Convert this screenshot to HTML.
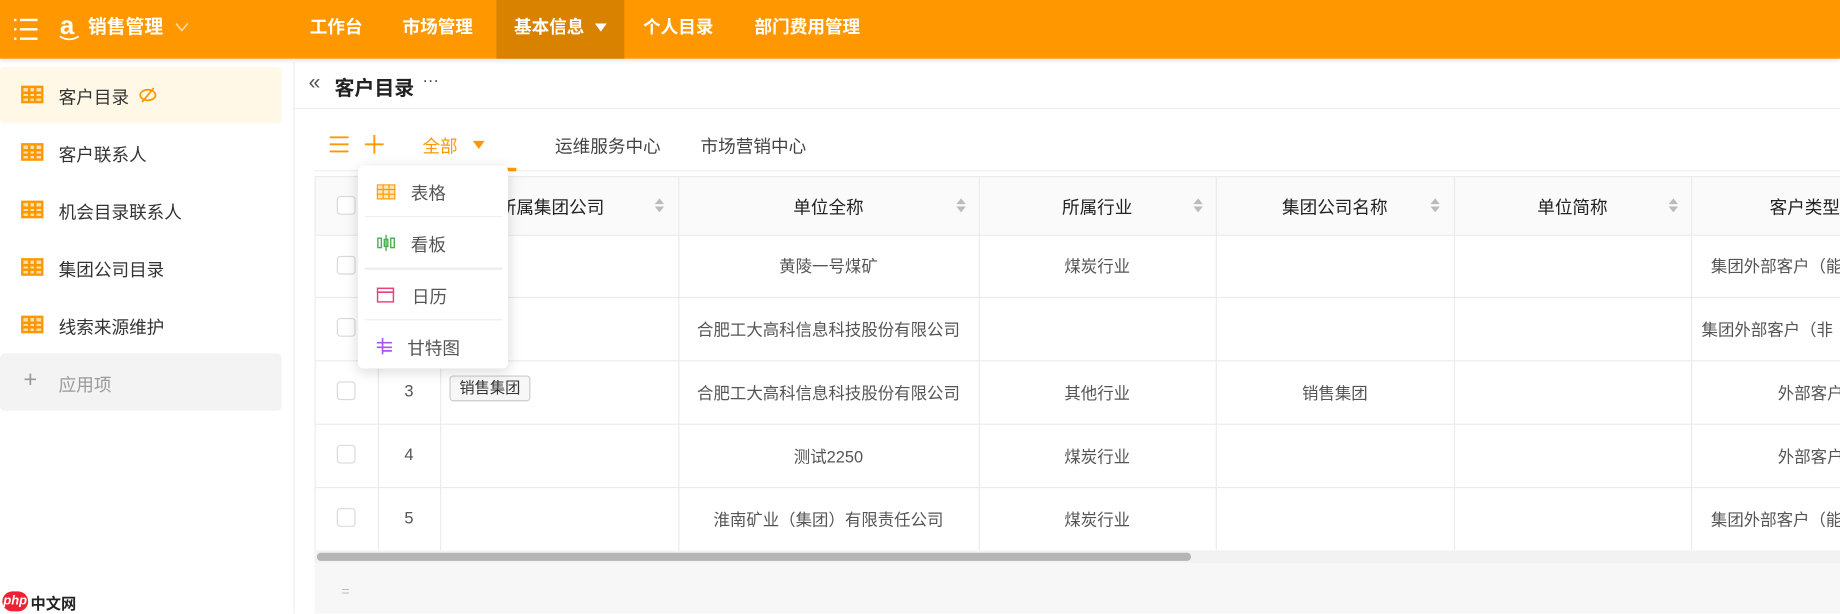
<!DOCTYPE html>
<html><head><meta charset="utf-8"><style>
*{box-sizing:border-box;margin:0;padding:0}
html,body{width:1840px;height:613px;overflow:hidden;background:#fff}
#w{position:absolute;left:0;top:0;width:1568px;height:523px;transform:scale(1.17347);transform-origin:0 0;font-family:"Liberation Sans","Noto Sans CJK SC",sans-serif;color:#333;overflow:hidden}
.a{position:absolute}
.top{left:0;top:0;width:1568px;height:50px;background:#ff9800;box-shadow:0 2px 4px rgba(0,0,0,.12)}
.nav{top:0;height:50px;line-height:48px;color:#fff;font-weight:bold;font-size:15px}
.side{font-size:15px;color:#333}
.gi{position:absolute;width:19px;height:15px;border:2px solid #ff9800;background:
linear-gradient(90deg,transparent 4px,#ff9800 4px,#ff9800 6px,transparent 6px,transparent 9px,#ff9800 9px,#ff9800 11px,transparent 11px),
linear-gradient(transparent 3px,#ff9800 3px,#ff9800 5px,transparent 5px,transparent 7px,#ff9800 7px,#ff9800 9px,transparent 9px);background-color:#ffe0b0}
.th{font-size:15px;color:#222;text-align:center}
.td{font-size:14px;color:#555;text-align:center}
.cb{position:absolute;width:16px;height:16px;border:1px solid #d9d9d9;border-radius:3px;background:#fff}
.vl{position:absolute;width:1px;background:#ebebeb}
.hl{position:absolute;height:1px;background:#ebebeb}
.sort{position:absolute;width:8px;height:12px}
.sort:before,.sort:after{content:"";position:absolute;left:0;border-left:4px solid transparent;border-right:4px solid transparent}
.sort:before{top:0;border-bottom:5px solid #bbb}
.sort:after{bottom:0;border-top:5px solid #bbb}
.dd{font-size:15px;color:#555}
</style></head><body><div id="w">
<div class="a top"></div>
<div class="a nav" style="left:423px;width:109px;background:#d98200"></div>
<svg class="a" style="left:11px;top:15px" width="22" height="20" viewBox="0 0 22 20"><g stroke="#fff" stroke-width="2"><line x1="1" y1="2" x2="3" y2="2"/><line x1="6" y1="2" x2="21" y2="2"/><line x1="1" y1="10" x2="3" y2="10"/><line x1="6" y1="10" x2="21" y2="10"/><line x1="1" y1="18" x2="3" y2="18"/><line x1="6" y1="18" x2="21" y2="18"/></g></svg>
<div class="a" style="left:51px;top:9px;color:#fff;font-size:22px;font-weight:bold;line-height:26px">a</div>
<svg class="a" style="left:50px;top:30px" width="18" height="6"><path d="M1 1 Q9 6 17 1" stroke="#fff" stroke-width="1.6" fill="none"/></svg>
<div class="a nav" style="left:75px;font-size:16px">销售管理</div>
<svg class="a" style="left:149px;top:18px" width="12" height="10"><path d="M1 2 L6 8 L11 2" stroke="#ffd9a0" stroke-width="1.3" fill="none"/></svg>
<div class="a nav" style="left:264px">工作台</div>
<div class="a nav" style="left:343px">市场管理</div>
<div class="a nav" style="left:438px">基本信息</div>
<div class="a" style="left:507px;top:20px;border-left:5px solid transparent;border-right:5px solid transparent;border-top:7px solid #fff"></div>
<div class="a nav" style="left:548px">个人目录</div>
<div class="a nav" style="left:643px">部门费用管理</div>

<div class="a" style="left:250px;top:50px;width:1px;height:473px;background:#eee"></div>
<div class="a" style="left:0;top:57px;width:240px;height:48px;background:#fff8e6;border-radius:4px"></div>
<div class="gi" style="left:18px;top:73px"></div><div class="a side" style="left:50px;top:72px">客户目录</div>
<svg class="a" style="left:118px;top:73px" width="16" height="16"><ellipse cx="8" cy="8" rx="6.5" ry="4.5" stroke="#ff9800" stroke-width="1.5" fill="none"/><line x1="3" y1="14" x2="13" y2="2" stroke="#ff9800" stroke-width="1.5"/></svg>
<div class="gi" style="left:18px;top:122px"></div><div class="a side" style="left:50px;top:121px">客户联系人</div>
<div class="gi" style="left:18px;top:171px"></div><div class="a side" style="left:50px;top:170px">机会目录联系人</div>
<div class="gi" style="left:18px;top:220px"></div><div class="a side" style="left:50px;top:219px">集团公司目录</div>
<div class="gi" style="left:18px;top:269px"></div><div class="a side" style="left:50px;top:268px">线索来源维护</div>
<div class="a" style="left:0;top:301px;width:240px;height:49px;background:#f3f3f3;border-radius:4px"></div>
<div class="a" style="left:20px;top:314px;font-size:20px;color:#999;line-height:20px">+</div>
<div class="a side" style="left:50px;top:317px;color:#999">应用项</div>
<div class="a" style="left:2px;top:504px;width:22px;height:17px;background:#e23;border-radius:9px;color:#fff;font-size:11px;font-style:italic;font-weight:bold;text-align:center;line-height:17px">php</div>
<div class="a" style="left:26px;top:504px;font-size:13px;font-weight:bold;color:#222">中文网</div>

<div class="a" style="left:263px;top:60px;font-size:18px;color:#555">«</div>
<div class="a" style="left:285px;top:61px;font-size:17px;font-weight:bold;color:#222">客户目录</div>
<div class="a" style="left:360px;top:60px;font-size:14px;color:#444">···</div>
<div class="a" style="left:251px;top:92px;width:1317px;height:1px;background:#eee"></div>

<svg class="a" style="left:280px;top:116px" width="18" height="14"><g stroke="#ff9800" stroke-width="1.6"><line x1="1" y1="1" x2="17" y2="1"/><line x1="1" y1="7" x2="17" y2="7"/><line x1="1" y1="13" x2="17" y2="13"/></g></svg>
<svg class="a" style="left:311px;top:115px" width="16" height="16"><g stroke="#ff9800" stroke-width="1.6"><line x1="8" y1="0" x2="8" y2="16"/><line x1="0" y1="8" x2="16" y2="8"/></g></svg>
<div class="a" style="left:360px;top:114px;font-size:15px;color:#ff9800">全部</div>
<div class="a" style="left:403px;top:120px;border-left:5px solid transparent;border-right:5px solid transparent;border-top:7px solid #ff9800"></div>
<div class="a" style="left:473px;top:114px;font-size:15px;color:#444">运维服务中心</div>
<div class="a" style="left:597px;top:114px;font-size:15px;color:#444">市场营销中心</div>
<div class="a" style="left:268px;top:145px;width:1300px;height:1px;background:#eee"></div>
<div class="a" style="left:355px;top:143px;width:85px;height:3px;background:#ff9800"></div>

<div class="a" style="left:268px;top:150px;width:1300px;height:50px;background:#fafafa;border-top:1px solid #ebebeb"></div>
<div class="vl" style="left:268px;top:150px;height:330px"></div>
<div class="vl" style="left:322px;top:150px;height:319px"></div>
<div class="vl" style="left:375px;top:150px;height:319px"></div>
<div class="vl" style="left:578px;top:150px;height:319px"></div>
<div class="vl" style="left:834px;top:150px;height:319px"></div>
<div class="vl" style="left:1036px;top:150px;height:319px"></div>
<div class="vl" style="left:1239px;top:150px;height:319px"></div>
<div class="vl" style="left:1441px;top:150px;height:319px"></div>
<div class="hl" style="left:268px;top:200px;width:1300px"></div>
<div class="hl" style="left:268px;top:253px;width:1300px"></div>
<div class="hl" style="left:268px;top:307px;width:1300px"></div>
<div class="hl" style="left:268px;top:361px;width:1300px"></div>
<div class="hl" style="left:268px;top:415px;width:1300px"></div>
<div class="cb" style="left:287px;top:167px"></div>
<div class="a th" style="left:425px;top:166px">所属集团公司</div><div class="sort" style="left:558px;top:169px"></div>
<div class="a th" style="left:578px;top:166px;width:256px">单位全称</div><div class="sort" style="left:815px;top:169px"></div>
<div class="a th" style="left:834px;top:166px;width:202px">所属行业</div><div class="sort" style="left:1017px;top:169px"></div>
<div class="a th" style="left:1036px;top:166px;width:203px">集团公司名称</div><div class="sort" style="left:1219px;top:169px"></div>
<div class="a th" style="left:1239px;top:166px;width:202px">单位简称</div><div class="sort" style="left:1422px;top:169px"></div>
<div class="a th" style="left:1508px;top:166px">客户类型</div>

<div class="cb" style="left:287px;top:218px"></div>
<div class="a td" style="left:578px;top:217px;width:256px">黄陵一号煤矿</div>
<div class="a td" style="left:834px;top:217px;width:202px">煤炭行业</div>
<div class="a td" style="left:1458px;top:217px;white-space:nowrap">集团外部客户（能</div>
<div class="cb" style="left:287px;top:271px"></div>
<div class="a td" style="left:578px;top:271px;width:256px">合肥工大高科信息科技股份有限公司</div>
<div class="a td" style="left:1450px;top:271px;white-space:nowrap">集团外部客户（非</div>
<div class="cb" style="left:287px;top:325px"></div>
<div class="a td" style="left:322px;top:325px;width:53px">3</div>
<div class="a" style="left:383px;top:320px;width:69px;height:22px;border:1px solid #ccc;border-radius:3px;background:#f7f7f7;font-size:13px;color:#333;text-align:center;line-height:20px">销售集团</div>
<div class="a td" style="left:578px;top:325px;width:256px">合肥工大高科信息科技股份有限公司</div>
<div class="a td" style="left:834px;top:325px;width:202px">其他行业</div>
<div class="a td" style="left:1036px;top:325px;width:203px">销售集团</div>
<div class="a td" style="left:1515px;top:325px;white-space:nowrap">外部客户</div>
<div class="cb" style="left:287px;top:379px"></div>
<div class="a td" style="left:322px;top:379px;width:53px">4</div>
<div class="a td" style="left:578px;top:379px;width:256px">测试2250</div>
<div class="a td" style="left:834px;top:379px;width:202px">煤炭行业</div>
<div class="a td" style="left:1515px;top:379px;white-space:nowrap">外部客户</div>
<div class="cb" style="left:287px;top:433px"></div>
<div class="a td" style="left:322px;top:433px;width:53px">5</div>
<div class="a td" style="left:578px;top:433px;width:256px">淮南矿业（集团）有限责任公司</div>
<div class="a td" style="left:834px;top:433px;width:202px">煤炭行业</div>
<div class="a td" style="left:1458px;top:433px;white-space:nowrap">集团外部客户（能</div>

<div class="a" style="left:268px;top:469px;width:1300px;height:11px;background:#f2f2f2"></div>
<div class="a" style="left:270px;top:471px;width:745px;height:7px;background:#b5b5b5;border-radius:4px"></div>
<div class="a" style="left:268px;top:480px;width:1300px;height:43px;background:#f7f7f7"></div>
<div class="a" style="left:291px;top:497px;font-size:12px;color:#bbb">=</div>

<div class="a" style="left:305px;top:141px;width:128px;height:173px;background:#fff;border-radius:5px;box-shadow:0 3px 12px rgba(0,0,0,.15)"></div>
<div class="hl" style="left:311px;top:184px;width:117px;background:#eee"></div>
<div class="hl" style="left:311px;top:228px;width:117px;height:2px;background:#eee"></div>
<div class="hl" style="left:311px;top:272px;width:117px;background:#eee"></div>
<svg class="a" style="left:321px;top:157px" width="16" height="13"><rect x="0.5" y="0.5" width="15" height="12" fill="#ffe6b8" stroke="#ff9800"/><g stroke="#ff9800"><line x1="5.5" y1="0" x2="5.5" y2="13"/><line x1="10.5" y1="0" x2="10.5" y2="13"/><line x1="0" y1="4.5" x2="16" y2="4.5"/><line x1="0" y1="8.5" x2="16" y2="8.5"/></g></svg>
<div class="a dd" style="left:350px;top:154px">表格</div>
<svg class="a" style="left:321px;top:200px" width="16" height="14"><g stroke="#4caf50" stroke-width="1.2" fill="none"><rect x="1" y="3" width="3" height="8"/><rect x="6.5" y="4" width="3" height="6"/><rect x="12" y="3" width="3" height="8"/><line x1="8" y1="0" x2="8" y2="14"/></g></svg>
<div class="a dd" style="left:350px;top:198px">看板</div>
<svg class="a" style="left:321px;top:244px" width="15" height="14"><rect x="0.7" y="1.7" width="13.6" height="11.6" fill="none" stroke="#ec407a" stroke-width="1.3"/><line x1="0" y1="5" x2="15" y2="5" stroke="#ec407a" stroke-width="1.3"/></svg>
<div class="a dd" style="left:351px;top:242px">日历</div>
<svg class="a" style="left:321px;top:288px" width="14" height="14"><g stroke="#a855f7" stroke-width="1.4"><line x1="0" y1="4" x2="13" y2="4"/><line x1="0" y1="8" x2="13" y2="8"/><line x1="5" y1="11" x2="13" y2="11"/><line x1="5" y1="0" x2="5" y2="14"/></g></svg>
<div class="a dd" style="left:347px;top:286px">甘特图</div>
</div></body></html>
